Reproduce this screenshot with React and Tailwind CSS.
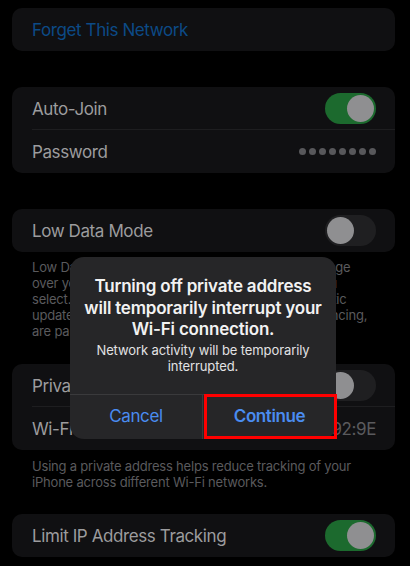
import React from "react";

const Toggle = ({ on }) => (
  <div
    className={`w-[51px] h-[31px] rounded-full p-[2px] flex items-center ${on ? "bg-[#1c6a2e] justify-end" : "bg-[#1f1f21] justify-start"}`}
  >
    <div className="w-[27px] h-[27px] rounded-full bg-[#8f8f91]" />
  </div>
);

const Row = ({ label, right, divider }) => (
  <div className="relative h-[43px] pl-5 pr-[19px] flex items-center justify-between">
    <span className="text-[17px] tracking-[-0.4px] text-[#9c9c9e] translate-y-[1px]">{label}</span>
    {right}
    {divider && <div className="absolute bottom-0 left-5 right-0 h-px bg-[#1e1e20]" />}
  </div>
);

const Card = ({ children, className = "" }) => (
  <div className={`ml-3 mr-[15px] rounded-[10px] bg-[#101012] overflow-hidden ${className}`}>{children}</div>
);

const Dots = () => (
  <div className="flex gap-[3px]">
    {[0, 1, 2, 3, 4, 5, 6, 7].map((i) => (
      <div key={i} className="w-[7px] h-[7px] rounded-full bg-[#58585b]" />
    ))}
  </div>
);

export default function App() {
  return (
    <div
      className="relative w-[410px] h-[566px] bg-black overflow-hidden"
      style={{ fontFamily: "Inter, 'Noto Sans', sans-serif" }}
    >
      <div className="pt-2">
        <Card>
          <div className="h-[43px] pl-5 flex items-center">
            <span className="text-[17px] tracking-[-0.4px] text-[#0c4a86] translate-y-[1px]">Forget This Network</span>
          </div>
        </Card>

        <Card className="mt-[36px]">
          <Row label="Auto-Join" right={<Toggle on />} divider />
          <Row label="Password" right={<Dots />} />
        </Card>

        <Card className="mt-[36px]">
          <Row label="Low Data Mode" right={<Toggle />} />
        </Card>
        <div className="px-8 pt-[7px] text-[13px] tracking-[-0.2px] leading-4 text-[#5a5a5d] whitespace-nowrap">
          <div>Low Data Mode helps reduce your iPhone data usage</div>
          <div>over your cellular network or specific networks you</div>
          <div>select. When Low Data Mode is turned on, automatic</div>
          <div>updates and background tasks, such as Photos syncing,</div>
          <div>are paused.</div>
        </div>

        <Card className="mt-[25px]">
          <Row label="Private Wi-Fi Address" right={<Toggle />} divider />
          <Row
            label="Wi-Fi Address"
            right={<span className="text-[17px] tracking-[-0.4px] text-[#5a5a5d] translate-y-[1px]">6E:8F:4A:D1:92:9E</span>}
          />
        </Card>
        <div className="px-8 pt-2 text-[13px] tracking-[-0.2px] leading-4 text-[#5a5a5d] whitespace-nowrap">
          <div>Using a private address helps reduce tracking of your</div>
          <div>iPhone across different Wi-Fi networks.</div>
        </div>

        <Card className="mt-6">
          <Row label="Limit IP Address Tracking" right={<Toggle on />} />
        </Card>
      </div>

      {/* alert */}
      <div className="absolute left-[70px] top-[257px] w-[266px] rounded-[14px] bg-[#262628] overflow-hidden">
        <div className="px-2 pt-[19px] pb-[20px] text-center">
          <div className="text-[17px] leading-[21.5px] font-semibold tracking-[-0.2px] text-[#f2f2f2] whitespace-nowrap">
            Turning off private address
            <br />
            will temporarily interrupt your
            <br />
            Wi-Fi connection.
          </div>
          <div className="mt-[1px] text-[13px] tracking-[-0.1px] leading-4 text-[#e2e2e4]">
            Network activity will be temporarily
            <br />
            interrupted.
          </div>
        </div>
        <div className="h-px bg-[#3a3a3c]" />
        <div className="grid grid-cols-2 h-[44px]">
          <div className="flex items-center justify-center border-r border-[#3a3a3c] text-[17px] tracking-[-0.4px] text-[#4a8cf0]">
            Cancel
          </div>
          <div className="flex items-center justify-center text-[17px] tracking-[-0.4px] font-semibold text-[#4a8cf0]">
            Continue
          </div>
        </div>
      </div>
      <div className="absolute left-[204px] top-[394px] w-[133px] h-[45px] border-[3px] border-[#ff0000]" />
    </div>
  );
}
